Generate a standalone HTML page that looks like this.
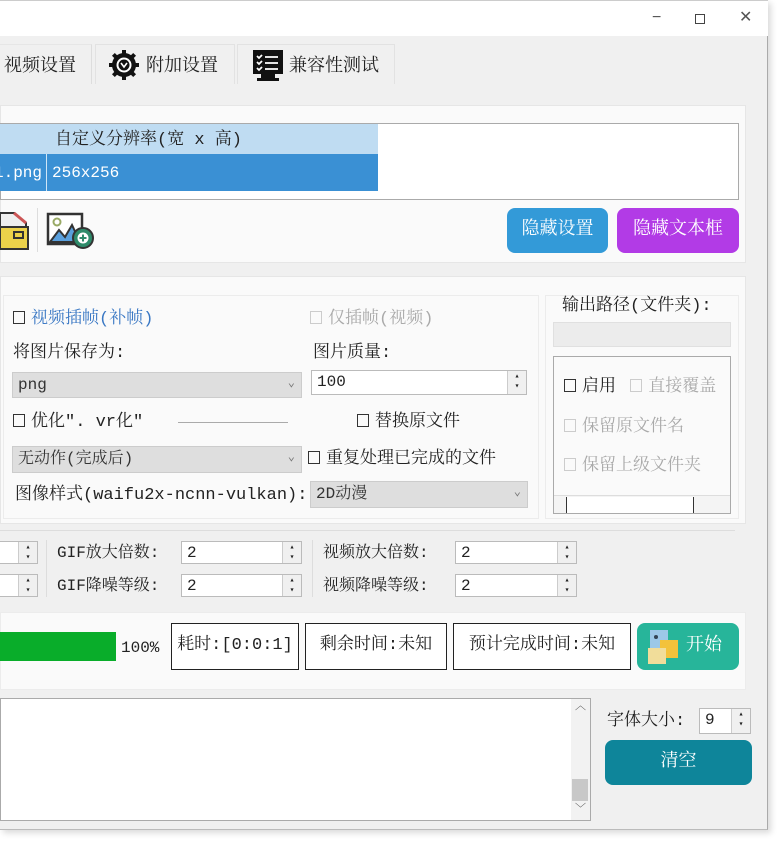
<!DOCTYPE html>
<html><head><meta charset="utf-8"><style>
*{box-sizing:border-box;margin:0;padding:0}
body{width:780px;height:843px;background:#fff;position:relative;overflow:hidden;font-family:"Liberation Mono","Noto Serif CJK SC",monospace;font-size:17px;color:#222}
.a{position:absolute}
.t{position:absolute;white-space:nowrap;line-height:1}
.spin{position:absolute;background:#fff;border:1px solid #bbb;font-size:16px;padding:2px 5px;line-height:18px}
.spin:after{content:"▴\A▾";white-space:pre;position:absolute;right:0;top:0;bottom:0;width:18px;border-left:1px solid #ccc;background:#f0f0f0;font-size:8px;line-height:10px;text-align:center;padding-top:1px}
.combo{position:absolute;background:#dedede;border:1px solid #ccc;font-size:16px;padding:2px 5px;line-height:20px;color:#333}
.combo:after{content:"⌄";position:absolute;right:6px;top:0;font-size:12px;color:#777}
.cb{display:inline-block;width:12px;height:13px;border:1px solid #333;margin-right:6px;vertical-align:-1px}
.cbd{border-color:#ccc}
.box{position:absolute;border:1.5px solid #222;background:#fff;font-size:17px;text-align:center;line-height:43px}
.btn{position:absolute;border-radius:8px;color:#fff;text-align:center;font-size:18px}
</style></head><body>
<div class="a" style="left:0;top:0;width:768px;height:830px;background:#f0f0f0;border-right:1px solid #aaa;border-bottom:1px solid #bbb;box-shadow:3px 3px 6px rgba(0,0,0,.15)"></div>
<div class="a" style="left:0;top:0;width:768px;height:36px;background:#fff;border-top:1px solid #ccc"></div>
<div class="t" style="left:652px;top:10px;font-size:16px;color:#555;font-family:'Liberation Sans',sans-serif">−</div>
<div class="a" style="left:695px;top:14px;width:10px;height:10px;border:1px solid #444"></div>
<div class="t" style="left:739px;top:10px;font-size:16px;color:#555;font-family:'Liberation Sans',sans-serif">✕</div>
<div class="a" style="left:0;top:44px;width:92px;height:40px;background:#f0f0f0;border-right:1px solid #ddd;border-top:1px solid #e6e6e6"></div>
<div class="t" style="left:4px;top:58px;font-size:18px">视频设置</div>
<div class="a" style="left:95px;top:44px;width:140px;height:40px;border:1px solid #e2e2e2;border-bottom:none"></div>
<svg class="a" style="left:108px;top:48px" width="32" height="34" viewBox="0 0 32 34"><circle cx="16" cy="17" r="12" fill="#111"/><g fill="#111"><rect x="14" y="2" width="4" height="30"/><rect x="1" y="15" width="30" height="4"/><rect x="14" y="2" width="4" height="30" transform="rotate(45 16 17)"/><rect x="14" y="2" width="4" height="30" transform="rotate(-45 16 17)"/></g><circle cx="16" cy="17" r="7.5" fill="#fff"/><circle cx="16" cy="17" r="5.5" fill="#111"/><path d="M13 15l3 4 3-4" stroke="#fff" stroke-width="1.6" fill="none"/></svg>
<div class="t" style="left:146px;top:58px;font-size:18px">附加设置</div>
<div class="a" style="left:237px;top:44px;width:158px;height:40px;border:1px solid #e2e2e2;border-bottom:none"></div>
<svg class="a" style="left:251px;top:48px" width="34" height="34" viewBox="0 0 34 34"><rect x="2" y="2" width="30" height="24" fill="#111"/><rect x="10" y="26" width="14" height="4" fill="#111"/><rect x="6" y="30" width="22" height="3" fill="#111"/><g stroke="#fff" stroke-width="1.8"><path d="M6 8l2 2 3-3M6 14l2 2 3-3M6 20l2 2 3-3"/><path d="M14 9h13M14 15h13M14 21h13"/></g></svg>
<div class="t" style="left:289px;top:58px;font-size:18px">兼容性测试</div>
<div class="a" style="left:0;top:105px;width:746px;height:158px;background:#fafafa;border:1px solid #e6e6e6"></div>
<div class="a" style="left:0;top:123px;width:739px;height:77px;background:#fff;border:1px solid #aaa"></div>
<div class="a" style="left:0;top:124px;width:378px;height:30px;background:#bfdcf2"></div>
<div class="t" style="left:55px;top:132px;font-size:17px">自定义分辨率(宽 x 高)</div>
<div class="a" style="left:0;top:154px;width:378px;height:37px;background:#3a90d4"></div>
<div class="a" style="left:46px;top:154px;width:1px;height:37px;background:#cfe6f7"></div>
<div class="t" style="left:-6px;top:165px;font-size:16px;color:#fff">1.png</div>
<div class="t" style="left:52px;top:165px;font-size:16px;color:#fff">256x256</div>
<svg class="a" style="left:0;top:207px" width="30" height="46" viewBox="0 0 30 46"><path d="M0 6h14l12 10v6H0z" fill="#eee" stroke="#333" stroke-width="2"/><path d="M14 6l12 10" stroke="#c55" stroke-width="3"/><rect x="0" y="20" width="28" height="22" fill="#ecd24a" stroke="#333" stroke-width="2"/><rect x="14" y="25" width="9" height="6" fill="none" stroke="#333" stroke-width="2"/></svg>
<div class="a" style="left:37px;top:208px;width:1px;height:44px;background:#ddd"></div>
<svg class="a" style="left:46px;top:210px" width="50" height="40" viewBox="0 0 50 40"><rect x="2" y="4" width="34" height="30" fill="#fff" stroke="#333" stroke-width="2.5"/><circle cx="11" cy="12" r="3.5" fill="none" stroke="#9a6" stroke-width="2"/><path d="M4 32l9-12 6 7 7-12 8 17z" fill="#5aa0dd" stroke="#333" stroke-width="2"/><circle cx="37" cy="28" r="10" fill="#2e8b6a" stroke="#333" stroke-width="2"/><circle cx="37" cy="28" r="5.5" fill="#fff"/><path d="M37 24.5v7M33.5 28h7" stroke="#2e8b6a" stroke-width="2"/></svg>
<div class="btn" style="left:507px;top:208px;width:101px;height:45px;background:#339ad8;line-height:45px">隐藏设置</div>
<div class="btn" style="left:617px;top:208px;width:122px;height:45px;background:#b23be6;line-height:45px">隐藏文本框</div>
<div class="a" style="left:0;top:276px;width:746px;height:248px;background:#fafafa;border:1px solid #e6e6e6"></div>
<div class="a" style="left:3px;top:295px;width:536px;height:224px;border:1px solid #ececec"></div>
<div class="t" style="left:13px;top:311px;color:#3a78c4"><span class="cb"></span>视频插帧(补帧)</div>
<div class="t" style="left:310px;top:311px;color:#aaa"><span class="cb cbd"></span>仅插帧(视频)</div>
<div class="t" style="left:13px;top:345px">将图片保存为:</div>
<div class="t" style="left:313px;top:345px">图片质量:</div>
<div class="combo" style="left:12px;top:372px;width:290px;height:26px">png</div>
<div class="spin" style="left:311px;top:370px;width:216px;height:25px">100</div>
<div class="t" style="left:13px;top:414px"><span class="cb"></span>优化". vr化"</div>
<div class="a" style="left:178px;top:422px;width:110px;height:1px;background:#aaa"></div>
<div class="t" style="left:357px;top:414px"><span class="cb"></span>替换原文件</div>
<div class="combo" style="left:12px;top:446px;width:290px;height:27px">无动作(完成后)</div>
<div class="t" style="left:308px;top:451px"><span class="cb"></span>重复处理已完成的文件</div>
<div class="t" style="left:15px;top:487px">图像样式(waifu2x-ncnn-vulkan):</div>
<div class="combo" style="left:310px;top:481px;width:218px;height:27px">2D动漫</div>
<div class="a" style="left:545px;top:295px;width:194px;height:224px;border:1px solid #ececec"></div>
<div class="t" style="left:560px;top:298px;background:#fafafa;padding:0 2px">输出路径(文件夹):</div>
<div class="a" style="left:553px;top:322px;width:178px;height:25px;background:#ececec;border:1px solid #e0e0e0"></div>
<div class="a" style="left:553px;top:356px;width:178px;height:158px;background:#fafafa;border:1px solid #aaa;overflow:hidden">
<div class="t" style="left:10px;top:22px"><span class="cb"></span>启用 <span style="color:#aaa"><span class="cb cbd" style="margin-left:4px"></span>直接覆盖</span></div>
<div class="t" style="left:10px;top:62px;color:#aaa"><span class="cb cbd"></span>保留原文件名</div>
<div class="t" style="left:10px;top:101px;color:#aaa"><span class="cb cbd"></span>保留上级文件夹</div>
<div class="a" style="left:0;top:138px;width:176px;height:18px;border-top:1px solid #ddd;background:#f4f4f4"></div>
<div class="a" style="left:12px;top:140px;width:128px;height:16px;border-left:1px solid #333;border-right:1px solid #333;background:#fff"></div>
</div>
<div class="a" style="left:0;top:530px;width:735px;height:1px;background:#ddd"></div>
<div class="spin" style="left:-10px;top:541px;width:48px;height:23px"></div>
<div class="spin" style="left:-10px;top:574px;width:48px;height:23px"></div>
<div class="a" style="left:46px;top:540px;width:1px;height:57px;background:#ddd"></div>
<div class="t" style="left:57px;top:545px;font-size:16px">GIF放大倍数:</div>
<div class="spin" style="left:181px;top:541px;width:121px;height:23px">2</div>
<div class="t" style="left:57px;top:578px;font-size:16px">GIF降噪等级:</div>
<div class="spin" style="left:181px;top:574px;width:121px;height:23px">2</div>
<div class="a" style="left:312px;top:540px;width:1px;height:57px;background:#ddd"></div>
<div class="t" style="left:323px;top:545px;font-size:16px">视频放大倍数:</div>
<div class="spin" style="left:455px;top:541px;width:122px;height:23px">2</div>
<div class="t" style="left:323px;top:578px;font-size:16px">视频降噪等级:</div>
<div class="spin" style="left:455px;top:574px;width:122px;height:23px">2</div>
<div class="a" style="left:0;top:612px;width:746px;height:78px;background:#fafafa;border:1px solid #ececec"></div>
<div class="a" style="left:0;top:632px;width:116px;height:29px;background:#09ad2a"></div>
<div class="t" style="left:121px;top:640px;font-size:16px">100%</div>
<div class="box" style="left:171px;top:623px;width:128px;height:47px">耗时:[0:0:1]</div>
<div class="box" style="left:305px;top:623px;width:142px;height:47px">剩余时间:未知</div>
<div class="box" style="left:453px;top:623px;width:178px;height:47px">预计完成时间:未知</div>
<div class="btn" style="left:637px;top:623px;width:102px;height:47px;background:#27b59a;line-height:47px;padding-left:32px">开始</div>
<svg class="a" style="left:646px;top:628px" width="36" height="38" viewBox="0 0 36 38"><rect x="4" y="2" width="18" height="20" fill="#9cc8e8"/><rect x="14" y="12" width="18" height="18" fill="#f3c23b"/><rect x="2" y="20" width="18" height="16" fill="#f1dd9a"/><circle cx="10" cy="9" r="2" fill="#345"/></svg>
<div class="a" style="left:0;top:698px;width:591px;height:123px;background:#fff;border:1px solid #aaa"></div>
<div class="a" style="left:571px;top:699px;width:19px;height:121px;background:#f2f2f2"></div>
<div class="t" style="left:575px;top:702px;font-size:11px;color:#555">︿</div>
<div class="t" style="left:575px;top:805px;font-size:11px;color:#555">﹀</div>
<div class="a" style="left:572px;top:779px;width:16px;height:22px;background:#c8c8c8"></div>
<div class="t" style="left:607px;top:713px">字体大小:</div>
<div class="spin" style="left:699px;top:708px;width:52px;height:26px">9</div>
<div class="btn" style="left:605px;top:740px;width:147px;height:45px;background:#0e859a;line-height:45px">清空</div>
</body></html>
